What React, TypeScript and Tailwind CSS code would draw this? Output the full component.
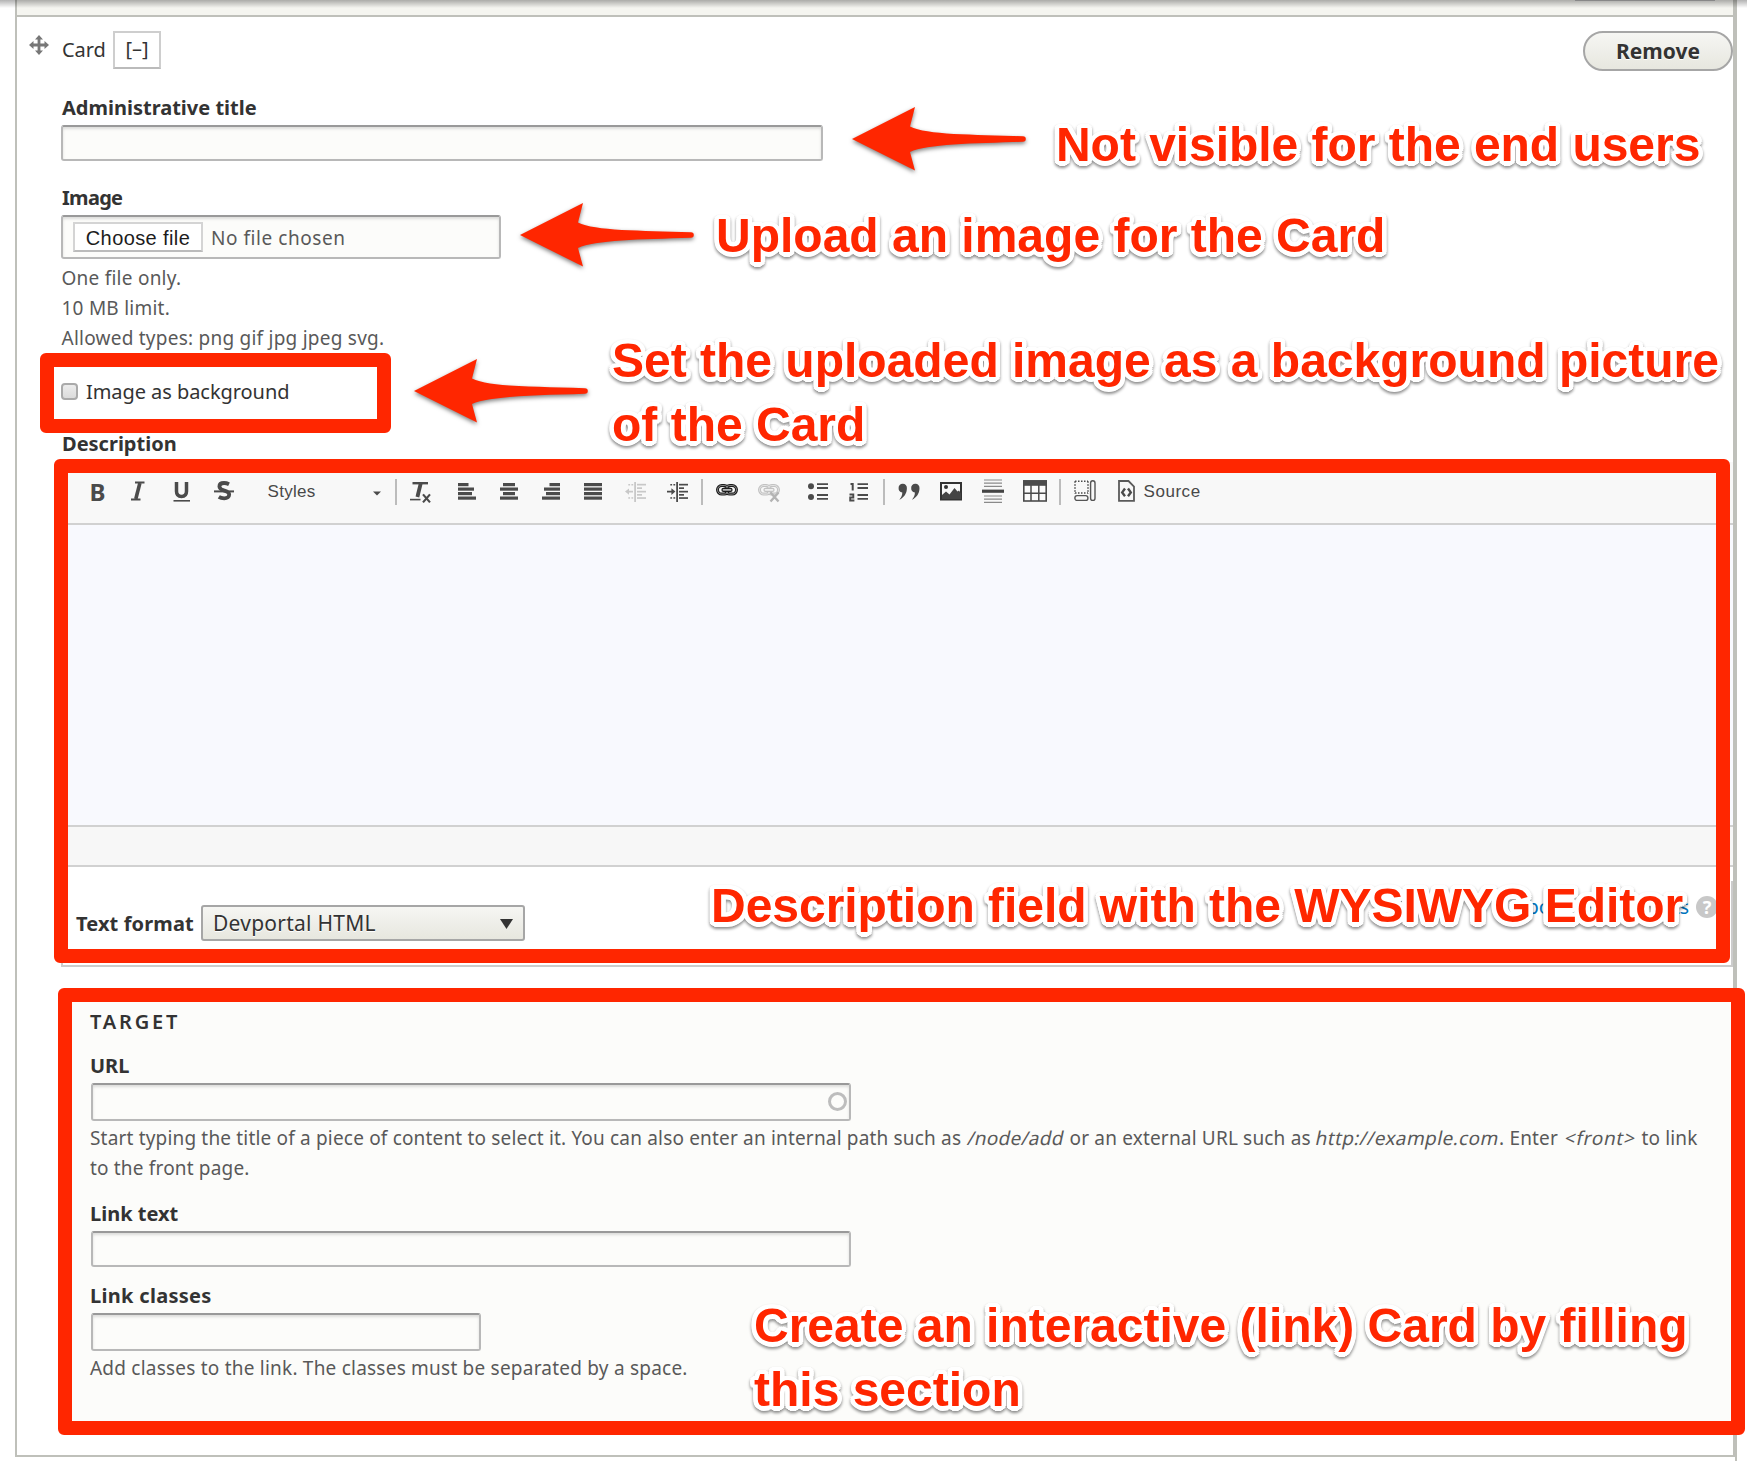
import type { ReactNode } from "react";

const INK = "#4b4b4b";

function Icon({ className, w, children }: { className: string; w: number; children: ReactNode }) {
  return (
    <svg className={`h-[26px] shrink-0 ${className}`} width={w} height={26} viewBox={`0 0 ${w} 26`} fill="none">
      {children}
    </svg>
  );
}

function Bars({ rows }: { rows: [number, number][] }) {
  return (
    <>
      {rows.map(([x, w], i) => (
        <rect key={i} x={x} y={4 + i * 4.5} width={w} height={3.2} fill={INK} />
      ))}
    </>
  );
}

function Separator({ className }: { className: string }) {
  return <span className={`h-[26px] w-[2px] shrink-0 bg-[#bcbcbc] ${className}`} />;
}

function Indent({ color, outdent }: { color: string; outdent?: boolean }) {
  return (
    <g fill={color}>
      <rect x="9.2" y="3" width="1.8" height="20" />
      <rect x="12" y="4.8" width="9" height="1.7" />
      <rect x="12" y="8.3" width="5" height="1.7" />
      <rect x="12" y="11.8" width="9" height="1.7" />
      <rect x="12" y="15" width="5" height="1.7" />
      <rect x="12" y="18.2" width="9" height="1.7" />
      <rect x="3.3" y="5" width="1.8" height="1.5" />
      <rect x="6.4" y="5" width="1.8" height="1.5" />
      <rect x="3.3" y="18.2" width="1.8" height="1.5" />
      <rect x="6.4" y="18.2" width="1.8" height="1.5" />
      {outdent ? (
        <path d="M0 12.6 4 9.4v2.3h4v1.8H4v2.3z" />
      ) : (
        <path d="M8.4 12.6 4.4 9.2v2.5H0v1.8h4.4V16z" />
      )}
    </g>
  );
}

function Chain({ color, inner }: { color: string; inner: string }) {
  return (
    <>
      <rect x="1.5" y="6.5" width="11" height="8.6" rx="4.3" stroke={color} strokeWidth="3" />
      <rect x="9.5" y="6.5" width="11" height="8.6" rx="4.3" stroke={color} strokeWidth="3" />
      <rect x="1.5" y="6.5" width="11" height="8.6" rx="4.3" stroke={inner} strokeWidth="0.7" />
      <rect x="9.5" y="6.5" width="11" height="8.6" rx="4.3" stroke={inner} strokeWidth="0.7" />
      <rect x="6" y="9.3" width="10" height="3" rx="1.4" fill={inner} stroke={color} strokeWidth="1.2" />
    </>
  );
}

function Toolbar() {
  return (
    <div className="flex h-[63px] items-start border-b-2 border-[#d1d1d1] bg-[#f8f8f8] pt-[17px] font-['Liberation_Sans',sans-serif] text-[17px] leading-[26px] text-[#484848]">
      <span className="ml-[28.5px] w-[17.5px] font-['Noto_Sans',sans-serif] text-[24px] leading-[25px] font-bold text-[#4b4b4b]">B</span>
      <Icon className="ml-[23px]" w={16}>
        <path d="M5 3.5h9.5M1 20.5h9.5" stroke={INK} strokeWidth="2" />
        <path d="M9.9 4 5.8 20" stroke={INK} strokeWidth="3.6" />
      </Icon>
      <Icon className="ml-[26.5px]" w={18}>
        <path d="M3.5 3v9.2c0 3.4 1.800 5.2 5 5.2s5-1.800 5-5.2V3" stroke={INK} strokeWidth="3.5" />
        <path d="M.5 21.8h16.5" stroke={INK} strokeWidth="1.6" />
      </Icon>
      <Icon className="ml-[23px]" w={20}>
        <path d="M15 5.200C13 4.200 11.600 4 10 4 7 4 5.400 5.500 5.400 7.500c0 5 9.800 3.300 9.800 8 0 2.200-1.900 3.800-5 3.800-2 0-4-.5-5.400-1.400" stroke={INK} strokeWidth="3.8" />
        <path d="M0 12.400h20" stroke={INK} strokeWidth="2" />
      </Icon>
      <span className="ml-[34px] w-[105px] tracking-[0.3px]">Styles</span>
      <Icon className="" w={8}>
        <path d="M0 12.500h8l-4 4z" fill={INK} />
      </Icon>
      <Separator className="ml-[14px]" />
      <Icon className="ml-[13px]" w={22}>
        <path d="M2.500 4.200h15.500" stroke={INK} strokeWidth="2.4" />
        <path d="M10.800 4 7.400 18" stroke={INK} strokeWidth="3.8" />
        <path d="M0 20.600h10.500" stroke={INK} strokeWidth="1.6" />
        <path d="m13 15.400 7 8M20 15.400l-7 8" stroke={INK} strokeWidth="2.2" />
      </Icon>
      <Icon className="ml-[26px]" w={18}><Bars rows={[[0, 10.5], [0, 16], [0, 14], [0, 18]]} /></Icon>
      <Icon className="ml-[24px]" w={18}><Bars rows={[[3, 12], [0, 18], [3, 12], [0, 18]]} /></Icon>
      <Icon className="ml-[24px]" w={18}><Bars rows={[[7.5, 10.5], [2, 16], [4, 14], [0, 18]]} /></Icon>
      <Icon className="ml-[24px]" w={18}><Bars rows={[[0, 18], [0, 18], [0, 18], [0, 18]]} /></Icon>
      <Icon className="ml-[23px]" w={21}><Indent color="#c8c8c8" outdent /></Icon>
      <Icon className="ml-[21px]" w={21}><Indent color={INK} /></Icon>
      <Separator className="ml-[13px]" />
      <Icon className="ml-[13px]" w={22}><Chain color="#1c1c1c" inner="#b5b5b5" /></Icon>
      <Icon className="ml-[20px]" w={22}>
        <Chain color="#c2c2c2" inner="#f0f0f0" />
        <path d="m12.500 13.500 8 9M20.500 13.500l-8 9" stroke="#b4b4b4" strokeWidth="2.4" />
      </Icon>
      <Icon className="ml-[28px]" w={20}>
        <circle cx="3" cy="7.3" r="3" fill={INK} />
        <circle cx="3" cy="18" r="3" fill={INK} />
        <path d="M9 5.200h11M9 9h11M9 16h11M9 19.800h11" stroke={INK} strokeWidth="1.8" />
      </Icon>
      <Icon className="ml-[21px]" w={20}>
        <path d="M1.500 5h2.200v6.500" stroke={INK} strokeWidth="2" />
        <path d="M.5 15.500h3.800v3H1.200v3h4.200" stroke={INK} strokeWidth="1.9" />
        <path d="M8.500 5.200H19M8.500 9H19M8.500 16H19M8.500 19.800H19" stroke={INK} strokeWidth="1.8" />
      </Icon>
      <Separator className="ml-[14px]" />
      <Icon className="ml-[13px]" w={22}>
        <path d="M4.600 4.800a4 4 0 0 1 4.300 4.400c0 5-3 9.600-7.600 11.500 2-2.500 3-4.500 3-7.200A4.300 4.300 0 0 1 .6 9 4 4 0 0 1 4.600 4.800z" fill={INK} />
        <path d="M17.200 4.800a4 4 0 0 1 4.300 4.400c0 5-3 9.600-7.600 11.500 2-2.500 3-4.500 3-7.200A4.300 4.300 0 0 1 13.200 9a4 4 0 0 1 4-4.200z" fill={INK} />
      </Icon>
      <Icon className="ml-[20px]" w={22}>
        <rect x="1" y="4" width="20" height="16.5" stroke="#333" strokeWidth="2" />
        <path d="M2 20v-4l4-3.500 3.500 3 5-6.500 3 3.500 1.500-1 2 3V20z" fill="#444" />
        <circle cx="6" cy="8" r="2" fill="#333" />
      </Icon>
      <Icon className="ml-[20px]" w={22}>
        <path d="M2 1h18M2 4.200h18M2 7.400h18M2 17h18M2 20.200h18M2 23.400h18" stroke="#8a8a8a" strokeWidth="1.2" />
        <path d="M0 12.200h22" stroke="#444" strokeWidth="3.2" />
      </Icon>
      <Icon className="ml-[19px]" w={24}>
        <rect x="0.8" y="2" width="22.4" height="20" fill="#fbfbfb" stroke={INK} strokeWidth="1.6" />
        <rect x="0" y="1.2" width="24" height="5.6" fill={INK} />
        <path d="M8 6v16M15.800 6v16M1 14.300h22" stroke={INK} strokeWidth="1.5" />
      </Icon>
      <Separator className="ml-[12px]" />
      <Icon className="ml-[13px]" w={22}>
        <path d="M1 2.200h13M1 2.200v12.500M14 2.200v12.500M1 14h13" stroke={INK} strokeWidth="1.5" strokeDasharray="1.5 1.5" />
        <rect x="16.6" y="1.8" width="4.4" height="19.6" rx="2.2" stroke="#555" strokeWidth="1.4" />
        <rect x="0.9" y="16.6" width="13" height="4.8" rx="2.2" stroke="#555" strokeWidth="1.4" />
      </Icon>
      <Icon className="ml-[22px]" w={17}>
        <path d="M1 2h9.500L16 7.500V21.800H1z" stroke="#5a5a5a" strokeWidth="1.8" />
        <path d="M7 9.500 4.200 13.400 7 17.200M10 9.500l2.800 3.900-2.800 3.800" stroke={INK} strokeWidth="2.4" />
      </Icon>
      <span className="ml-[9px] tracking-[0.55px]">Source</span>
    </div>
  );
}

function Label({ className = "h-[33px]", children }: { className?: string; children: ReactNode }) {
  return <div className={`text-[20px] leading-[32px] font-bold text-[#333] ${className}`}>{children}</div>;
}

function Field({ className, children }: { className: string; children?: ReactNode }) {
  return (
    <div className={`flex items-center rounded-[3px] border-2 border-[#b8b8b8] border-t-[#999] bg-[#fcfcfa] shadow-[inset_0_2px_3px_rgba(0,0,0,0.13)] ${className}`}>
      {children}
    </div>
  );
}

function Slanted({ className, children }: { className: string; children: ReactNode }) {
  return <em className={`inline-block -skew-x-12 not-italic ${className}`}>{children}</em>;
}

function Arrow({ className }: { className: string }) {
  return (
    <svg className={`absolute overflow-visible drop-shadow-[0_2px_2px_rgba(0,0,0,0.5)] ${className}`} width="175" height="64" viewBox="0 0 175 64">
      <path d="M0 32 63 0 58 19.500C75 28 120 27.500 171 29.200a2.800 2.800 0 0 1 0 5.600C120 36.500 75 37 58 45l5 18.500z" fill="#ff2600" />
    </svg>
  );
}

function Note({ className, children }: { className: string; children: ReactNode }) {
  return (
    <div
      className={`absolute font-['Liberation_Sans',sans-serif] text-[48px] leading-[64px] font-bold whitespace-nowrap text-[#ff2600] drop-shadow-[0_2px_1.5px_rgba(0,0,0,0.45)] [text-shadow:4.5px_0_#fff,4.2px_1.7px_#fff,3.2px_3.2px_#fff,1.7px_4.2px_#fff,0_4.5px_#fff,-1.7px_4.2px_#fff,-3.2px_3.2px_#fff,-4.2px_1.7px_#fff,-4.5px_0_#fff,-4.2px_-1.7px_#fff,-3.2px_-3.2px_#fff,-1.7px_-4.2px_#fff,0_-4.5px_#fff,1.7px_-4.2px_#fff,3.2px_-3.2px_#fff,4.2px_-1.7px_#fff] ${className}`}
    >
      {children}
    </div>
  );
}

export default function App() {
  return (
    <div className="relative h-[1461px] w-[1747px] overflow-hidden bg-white font-['Noto_Sans',sans-serif] text-[#333]">
      <div className="h-full w-[1737px] border-r-2 border-[#bfc0ba] pl-[15px]">
        <div className="h-[1457px] w-[1720px] border-x-2 border-b-2 border-[#bfc0ba]">
          <div className="h-[17px] border-b-2 border-[#bfc0ba] bg-[#f5f5f0]" />

          <div className="flex h-[54px] items-start pt-[14px] pl-[12px]">
            <svg className="mt-[4px]" width="20" height="20" viewBox="0 0 20 20" fill="#777">
              <path d="M10 0l4 4.500h-2.600v4.100h4.100V6L20 10l-4.500 4v-2.600h-4.100v4.100H14L10 20l-4-4.500h2.600v-4.100H4.500V14L0 10l4.500-4v2.600h4.100V4.500H6z" />
            </svg>
            <span className="ml-[13px] w-[51px] text-[20px] leading-[38px] tracking-[-0.1px]">Card</span>
            <button className="flex h-[38px] w-[48px] justify-center border-2 border-[#cecece] border-b-[#bbb] bg-white text-[20px] leading-[32px]">[–]</button>
            <button className="ml-auto h-[40px] w-[150px] rounded-full border-2 border-[#a6a6a6] bg-linear-to-b from-[#f6f6f3] to-[#e7e7df] text-[21px] leading-[35px] font-bold [text-shadow:0_1px_#fff]">
              Remove
            </button>
          </div>

          <div className="pl-[45px]">
            <Label className="mt-[21px] h-[33px]">Administrative title</Label>
            <Field className="-ml-px h-[36px] w-[762px]" />

            <Label className="mt-[21px] h-[33px] tracking-[-0.7px]">Image</Label>
            <Field className="-ml-px h-[44px] w-[440px] pl-[10px]">
              <span className="h-[30px] w-[130px] border-2 border-[#d4d4d4] border-b-[#bbb] bg-white text-center font-['Liberation_Sans',sans-serif] text-[20px] leading-[29px] tracking-[0.4px] text-[#1c1c1c]">
                Choose file
              </span>
              <span className="mt-[2px] ml-[8px] text-[19px] tracking-[0.55px] text-[#595959]">No file chosen</span>
            </Field>
            <div className="mt-[4px] -ml-[0.5px] text-[19px] leading-[30px] tracking-[0.24px] text-[#595959]">
              <div>One file only.</div>
              <div>10 MB limit.</div>
              <div>Allowed types: png gif jpg jpeg svg.</div>
            </div>

            <div className="mt-[23px] -ml-px flex h-[30px] items-center">
              <span className="h-[17px] w-[17px] rounded-[4px] border-2 border-[#aaa] bg-linear-to-b from-[#ececec] to-[#dcdcdc]" />
              <span className="mt-[2px] ml-[8px] text-[20px] leading-[30px] tracking-[-0.06px]">Image as background</span>
            </div>

            <Label className="mt-[22px] h-[34px]">Description</Label>
            <div className="-ml-px">
              <div className="border-b-2 border-[#d1d1d1]">
                <Toolbar />
                <div className="h-[302px] border-b-2 border-[#d1d1d1] bg-[#f8f9fe]" />
                <div className="h-[38px] bg-[#f7f7f7]" />
              </div>
              <div className="mt-[14px] flex h-[86px] items-start border-x-2 border-b-2 border-[#ccc] pt-[24px] pl-[13px]">
                <span className="w-[125px] text-[20px] leading-[37px] font-bold tracking-[0.12px]">Text format</span>
                <div className="flex h-[36px] w-[324px] items-center justify-between rounded-[3px] border-2 border-[#a6a6a6] bg-linear-to-b from-[#f6f6f3] to-[#e7e7df] pr-[10px] pl-[10px] text-[21px] leading-[32px] tracking-[0.25px] [text-shadow:0_1px_#fff]">
                  Devportal HTML
                  <svg className="mt-[2px]" width="13" height="10" viewBox="0 0 13 10"><path d="M0 0h13L6.500 10z" fill="#333" /></svg>
                </div>
                <span className="-mt-[13px] ml-auto text-[20px] leading-[30px] tracking-[-0.1px] text-[#0074bd]">About text formats</span>
                <span className="-mt-[9px] mr-[13px] ml-[7px] h-[22px] w-[22px] rounded-full bg-[#c8c8c8] text-center text-[18px] leading-[22px] font-bold text-white">?</span>
              </div>
            </div>
          </div>

          <div className="mt-[27px] ml-[48px] h-[435px] bg-[#fcfcfa] pt-[12px] pl-[25px]">
            <div className="h-[44px] text-[20px] leading-[32px] font-semibold tracking-[2.8px]">TARGET</div>
            <Label>URL</Label>
            <Field className="ml-px h-[38px] w-[760px] justify-end pr-[2px]">
              <span className="mb-[2px] h-[19px] w-[19px] rounded-full border-[3.5px] border-[#bdbdbd]" />
            </Field>
            <p className="mt-[2px] text-[19px] leading-[30px] tracking-[0.175px] text-[#595959]">
              Start typing the title of a piece of content to select it. You can also enter an internal path such as <Slanted className="ml-[2px] tracking-[0.25px]">/node/add</Slanted> or an external URL such as <Slanted className="tracking-[0.4px]">http://example.com</Slanted>. Enter{" "}
              <Slanted className="ml-[2px] tracking-[0.75px]">&lt;front&gt;</Slanted> to link
              <br />
              to the front page.
            </p>
            <Label className="mt-[15px] h-[33px]">Link text</Label>
            <Field className="ml-px h-[36px] w-[760px]" />
            <Label className="mt-[13px] h-[33px] tracking-[0.3px]">Link classes</Label>
            <Field className="ml-px h-[38px] w-[390px]" />
            <p className="mt-[2px] text-[19px] leading-[30px] tracking-[0.22px] text-[#595959]">Add classes to the link. The classes must be separated by a space.</p>
          </div>
        </div>
      </div>

      <div className="absolute inset-x-0 top-0 h-[8px] bg-linear-to-b from-black/30 to-transparent" />
      <div className="absolute top-0 left-[1575px] h-px w-[140px] bg-[#888]" />

      <div className="absolute top-[353px] left-[40px] h-[80px] w-[351px] rounded-[6px] border-[14px] border-[#ff2600]" />
      <div className="absolute top-[459px] left-[54px] h-[504px] w-[1676px] rounded-[6px] border-[14px] border-[#ff2600]" />
      <div className="absolute top-[988px] left-[58px] h-[447px] w-[1687px] rounded-[6px] border-[14px] border-[#ff2600]" />

      <Arrow className="top-[107px] left-[852px]" />
      <Arrow className="top-[203px] left-[520px]" />
      <Arrow className="top-[359px] left-[414px]" />

      <Note className="top-[113px] left-[1056px] tracking-[-0.04px]">Not visible for the end users</Note>
      <Note className="top-[204px] left-[716px]">Upload an image for the Card</Note>
      <Note className="top-[329px] left-[612px]">
        Set the uploaded image as a background picture
        <br />
        of the Card
      </Note>
      <Note className="top-[874px] left-[711px] tracking-[-0.03px]">Description field with the WYSIWYG Editor</Note>
      <Note className="top-[1294px] left-[754px]">
        Create an interactive (link) Card by filling
        <br />
        this section
      </Note>
    </div>
  );
}
